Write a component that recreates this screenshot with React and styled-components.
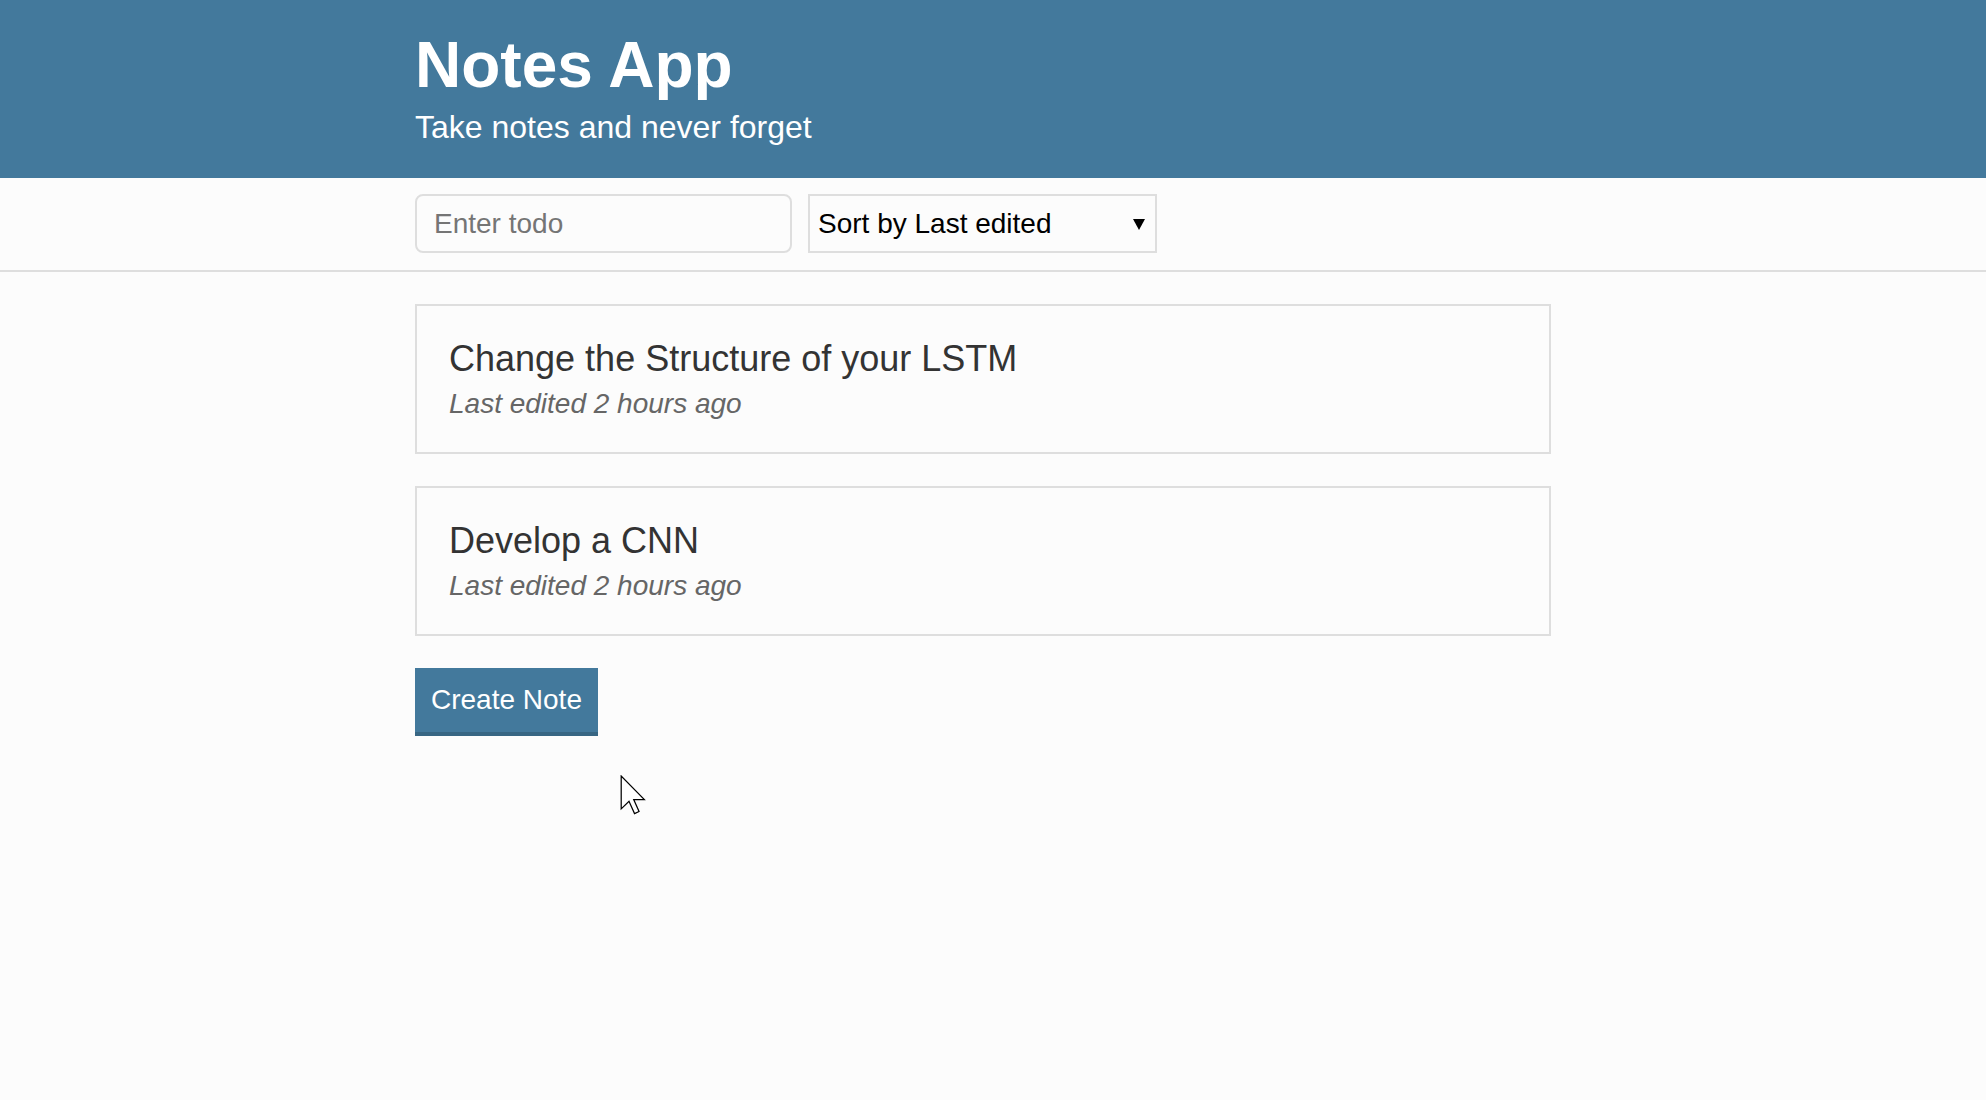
import React from "react";
import styled, { createGlobalStyle } from "styled-components";

const GlobalStyle = createGlobalStyle`
  html, body {
    margin: 0;
    padding: 0;
    background: #fcfcfc;
    font-family: "Liberation Sans", Arial, sans-serif;
  }
  * { box-sizing: border-box; }
`;

const Page = styled.div`
  min-height: 1100px;
  position: relative;
`;

const Container = styled.div`
  width: 1136px;
  margin-left: calc((100% - 1136px - 20px) / 2);
`;

const Header = styled.header`
  background: #43799c;
  color: #ffffff;
  padding: 33px 0 35px;
`;

const Title = styled.h1`
  margin: 0 0 14px;
  font-size: 64px;
  line-height: 64px;
  font-weight: 700;
`;

const Subtitle = styled.h2`
  margin: 0;
  font-size: 32px;
  line-height: 32px;
  font-weight: 400;
`;

const ActionsBar = styled.div`
  background: #fcfcfc;
  border-bottom: 2px solid #dedede;
  padding: 16px 0 17px;
`;

const ActionsRow = styled.div`
  display: flex;
  gap: 16px;
  align-items: center;
`;

const TextInput = styled.input`
  width: 377px;
  height: 59px;
  border: 2px solid #dedede;
  border-radius: 8px;
  padding: 0 17px;
  font-family: inherit;
  font-size: 28px;
  color: #333;
  background: #fcfcfc;
  outline: none;
  &::placeholder {
    color: #757575;
  }
`;

const SelectWrap = styled.div`
  position: relative;
  width: 349px;
  height: 59px;
`;

const Select = styled.select`
  appearance: none;
  -webkit-appearance: none;
  width: 100%;
  height: 100%;
  border: 2px solid #dedede;
  border-radius: 0;
  background: #fcfcfc;
  padding: 0 8px;
  font-family: inherit;
  font-size: 28px;
  color: #000;
  outline: none;
`;

const Arrow = styled.span`
  position: absolute;
  right: 12px;
  top: 50%;
  width: 0;
  height: 0;
  margin-top: -5px;
  border-left: 6px solid transparent;
  border-right: 6px solid transparent;
  border-top: 11px solid #000;
  pointer-events: none;
`;

const Content = styled.main`
  padding-top: 32px;
  display: flex;
  flex-direction: column;
  gap: 32px;
  align-items: flex-start;
`;

const List = styled.div`
  display: flex;
  flex-direction: column;
  gap: 32px;
  width: 100%;
`;

const Card = styled.div`
  border: 2px solid #dedede;
  height: 150px;
  padding: 33px 32px 0;
  background: #fcfcfc;
`;

const CardTitle = styled.h3`
  margin: 0 0 9px;
  font-size: 36px;
  line-height: 40px;
  font-weight: 400;
  color: #333333;
`;

const CardMeta = styled.p`
  margin: 0;
  font-size: 28px;
  line-height: 32px;
  font-style: italic;
  color: #666666;
`;

const Button = styled.button`
  background: #43799c;
  border: none;
  border-bottom: 4px solid #386683;
  color: #ffffff;
  font-family: inherit;
  font-size: 28px;
  line-height: 32px;
  padding: 16px 16px;
  cursor: pointer;
`;

const Cursor = styled.svg`
  position: absolute;
  left: 620px;
  top: 775px;
  pointer-events: none;
`;

const notes = [
  { id: 1, title: "Change the Structure of your LSTM", edited: "Last edited 2 hours ago" },
  { id: 2, title: "Develop a CNN", edited: "Last edited 2 hours ago" },
];

export default function App() {
  return (
    <Page>
      <GlobalStyle />
      <Header>
        <Container>
          <Title>Notes App</Title>
          <Subtitle>Take notes and never forget</Subtitle>
        </Container>
      </Header>
      <ActionsBar>
        <Container>
          <ActionsRow>
            <TextInput placeholder="Enter todo" />
            <SelectWrap>
              <Select defaultValue="edited">
                <option value="edited">Sort by Last edited</option>
                <option value="created">Sort by Recently created</option>
                <option value="alpha">Sort alphabetically</option>
              </Select>
              <Arrow />
            </SelectWrap>
          </ActionsRow>
        </Container>
      </ActionsBar>
      <Container>
        <Content>
          <List>
            {notes.map((n) => (
              <Card key={n.id}>
                <CardTitle>{n.title}</CardTitle>
                <CardMeta>{n.edited}</CardMeta>
              </Card>
            ))}
          </List>
          <Button>Create Note</Button>
        </Content>
      </Container>
      <Cursor width="26" height="40" viewBox="0 0 12.5 19.5">
        <path
          d="M0.5 0.5 L0.5 16.5 L4.3 12.8 L7 18.8 L9.2 17.8 L6.6 12 L11.8 12 Z"
          fill="#ffffff"
          stroke="#000000"
          strokeWidth="0.6"
          strokeLinejoin="miter"
        />
      </Cursor>
    </Page>
  );
}
